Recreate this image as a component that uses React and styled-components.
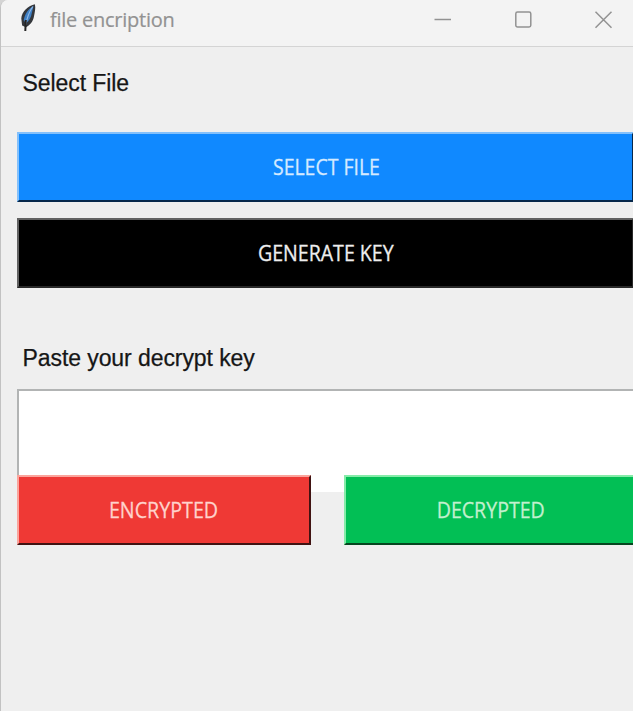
import React from "react";
import styled, { createGlobalStyle } from "styled-components";

const GlobalStyle = createGlobalStyle`
  * { box-sizing: border-box; }
  body { margin: 0; background: #d4d4d4; overflow: hidden; }
`;

const Window = styled.div`
  width: 633px;
  height: 711px;
  overflow: hidden;
  display: flex;
  flex-direction: column;
  background: #efefef;
  border-left: 1px solid #c2c2c2;
  border-top-left-radius: 8px;
`;

const TitleBar = styled.header`
  flex: none;
  height: 47px;
  display: flex;
  align-items: flex-start;
  background: #f3f3f3;
  border-bottom: 1px solid #d4d4d4;
`;

const Feather = styled.svg`
  flex: none;
  width: 18px;
  height: 30px;
  margin: 3px 0 0 18px;
`;

const Title = styled.h1`
  flex: 1;
  margin: 6px 0 0 13px;
  font: 400 20px/28px "Open Sans", sans-serif;
  letter-spacing: -0.25px;
  color: #929292;
  -webkit-text-stroke: 0.2px #929292;
  white-space: nowrap;
`;

const Controls = styled.div`
  display: flex;
  gap: 61.5px;
  margin: 10px 20px 0 0;
`;

const ControlIcon = styled.svg`
  width: 19px;
  height: 19px;
  fill: none;
  stroke: #929292;
  stroke-width: 1.5;
`;

const Body = styled.main`
  flex: 1;
  display: flex;
  flex-direction: column;
  padding: 21px 0 0 16px;
  width: 640px;
`;

const Label = styled.label`
  height: 28px;
  padding-left: 5.5px;
  margin-top: ${(p) => p.$gap || 0}px;
  font: 400 23px/30px "Liberation Sans", sans-serif;
  letter-spacing: -0.08px;
  color: #161616;
  -webkit-text-stroke: 0.25px #161616;
  white-space: nowrap;
`;

const Button = styled.button`
  flex: none;
  display: flex;
  justify-content: center;
  align-items: center;
  width: ${(p) => p.$width}px;
  height: 70px;
  margin: ${(p) => p.$gap || 0}px 0 0;
  padding: 0 0 2px;
  background: ${(p) => p.$fill};
  border: 2px solid;
  border-color: ${(p) => p.$light} ${(p) => p.$dark} ${(p) => p.$dark} ${(p) => p.$light};
  color: ${(p) => p.$ink};
  font: 400 22px/30px "Open Sans", sans-serif;
`;

const Caption = styled.span`
  flex: none;
  white-space: nowrap;
  -webkit-text-stroke: 0.3px currentColor;
  transform: translateX(${(p) => p.$shift || 0}px) scaleX(${(p) => p.$stretch});
`;

const KeyField = styled.input`
  flex: none;
  width: 640px;
  height: 103px;
  margin-top: 18px;
  border: 0 solid #b2b4b4;
  border-width: 2px 0 0 2px;
  border-radius: 0;
  background: #fff;
  outline: none;
`;

const Actions = styled.div`
  position: relative;
  display: flex;
  gap: 33px;
  margin-top: -17px;
`;

export default function App() {
  return (
    <>
      <GlobalStyle />
      <Window>
        <TitleBar>
          <Feather viewBox="0 0 18 30">
            <path d="M15.900 1.200C9.500 2.500 2.600 8.500 2.300 15.500l.8 7 3.700 1.700c4-2 7.600-6 8.200-11 .8-4 1.800-8 .9-12z" fill="#34373c" />
            <path d="M14.500 3.200C9.500 5.500 5.600 11 4.700 17.500l2.400 2.700c3-2.500 5.200-6 5.700-10.200z" fill="#3f7fc4" />
            <path d="M13.800 3.500C10 9 8 15 6.700 22" fill="none" stroke="#8fb8e4" strokeWidth="1.200" />
            <path d="M6.800 17L6.300 28" fill="none" stroke="#242424" strokeWidth="2" />
          </Feather>
          <Title>file encription</Title>
          <Controls>
            <ControlIcon viewBox="0 0 19 19"><path d="M1.500 9.500h16.500" /></ControlIcon>
            <ControlIcon viewBox="0 0 19 19"><rect x="1.800" y="2" width="15" height="15" rx="1.700" /></ControlIcon>
            <ControlIcon viewBox="0 0 19 19"><path d="M1.500 1.700l16 16M17.500 1.700l-16 16" /></ControlIcon>
          </Controls>
        </TitleBar>
        <Body>
          <Label>Select File</Label>
          <Button $width={617} $gap={36} $fill="#1089ff" $light="#83c0fb" $dark="#07284b" $ink="#d5eaff">
            <Caption $stretch={0.885} $shift={1}>SELECT FILE</Caption>
          </Button>
          <Button $width={617} $gap={16} $fill="#000" $light="#626262" $dark="#292929" $ink="#eee">
            <Caption $stretch={0.89} $shift={0.5}>GENERATE KEY</Caption>
          </Button>
          <Label $gap={55}>Paste your decrypt key</Label>
          <KeyField aria-label="Decrypt key" />
          <Actions>
            <Button $width={294} $fill="#ef3935" $light="#fba49c" $dark="#401312" $ink="#ffd3cc">
              <Caption $stretch={0.895} $shift={-0.5}>ENCRYPTED</Caption>
            </Button>
            <Button $width={294} $fill="#02bf55" $light="#85eca9" $dark="#05461f" $ink="#c2f0ce">
              <Caption $stretch={0.89}>DECRYPTED</Caption>
            </Button>
          </Actions>
        </Body>
      </Window>
    </>
  );
}
